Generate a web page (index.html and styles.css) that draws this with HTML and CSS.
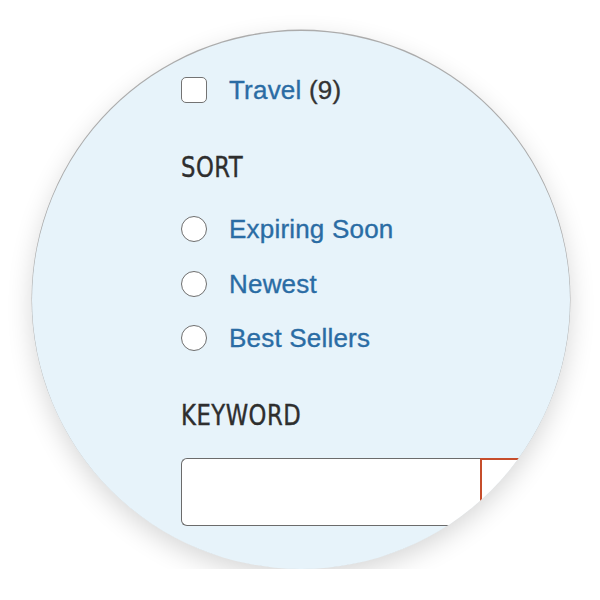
FILE: index.html
```html
<!DOCTYPE html>
<html lang="en">
<head>
<meta charset="utf-8">
<title>Filters</title>
<link rel="stylesheet" href="styles.css">
</head>
<body>
<div class="lens">
  <div class="panel">
    <label class="option">
      <span class="checkbox"></span>
      <span class="label-text"><span class="link">Travel</span> <span class="count">(9)</span></span>
    </label>

    <h2 class="heading heading-sort">SORT</h2>
    <div class="radio-list">
      <label class="option">
        <span class="radio"></span>
        <span class="label-text link">Expiring Soon</span>
      </label>
      <label class="option">
        <span class="radio"></span>
        <span class="label-text link">Newest</span>
      </label>
      <label class="option">
        <span class="radio"></span>
        <span class="label-text link">Best Sellers</span>
      </label>
    </div>

    <h2 class="heading heading-keyword">KEYWORD</h2>
    <div class="search">
      <div class="search-input"></div>
      <div class="search-button"></div>
    </div>
  </div>
</div>
</body>
</html>
```

FILE: styles.css
```css
html, body {
  margin: 0;
  padding: 0;
  background: #ffffff;
}

.lens {
  width: 538px;
  height: 538px;
  margin: 31px 0 0 32px;
  border-radius: 50%;
  overflow: hidden;
  background: #e7f3fa;
  box-shadow: 0 -1px 0 0.4px rgba(0, 0, 0, 0.3), 0 8px 26px rgba(0, 0, 0, 0.16);
}

.panel {
  padding: 46px 0 0 149px;
  display: flex;
  flex-direction: column;
  align-items: flex-start;
  font-family: "Liberation Sans", Arial, sans-serif;
}

.option {
  display: flex;
  align-items: center;
  height: 26px;
}

.checkbox {
  box-sizing: border-box;
  width: 26px;
  height: 26px;
  background: #ffffff;
  border: 1.5px solid #737373;
  border-radius: 5px;
  flex: none;
}

.radio {
  box-sizing: border-box;
  width: 26px;
  height: 26px;
  background: #ffffff;
  border: 1.5px solid #6e6e6e;
  border-radius: 50%;
  flex: none;
}

.label-text {
  margin-left: 22px;
  font-size: 26px;
  line-height: 26px;
  letter-spacing: 0.2px;
  white-space: nowrap;
  -webkit-text-stroke: 0.35px currentColor;
}

.link {
  color: #2a6ca4;
}

.count {
  color: #333333;
}

.heading {
  margin: 0;
  height: 30px;
  line-height: 30px;
  font-family: "DejaVu Sans Condensed", "DejaVu Sans", sans-serif;
  font-stretch: condensed;
  font-weight: normal;
  font-size: 29px;
  color: #2e2e2e;
  letter-spacing: 0.6px;
  transform: scaleX(0.87);
  transform-origin: left center;
  -webkit-text-stroke: 0.4px currentColor;
}

.heading-sort {
  margin-top: 49px;
}

.radio-list {
  margin-top: 34px;
  display: flex;
  flex-direction: column;
  gap: 28.5px;
}

.heading-keyword {
  margin-top: 49px;
}

.search {
  margin-top: 28px;
  display: flex;
  height: 68px;
}

.search-input {
  box-sizing: border-box;
  flex: none;
  width: 299px;
  height: 68px;
  background: #ffffff;
  border: 1.5px solid #6b6b6b;
  border-right: none;
  border-radius: 6px 0 0 6px;
}

.search-button {
  box-sizing: border-box;
  flex: none;
  width: 120px;
  height: 68px;
  background: #ffffff;
  border: 2px solid #c64d2b;
  border-radius: 0 6px 6px 0;
}
```
